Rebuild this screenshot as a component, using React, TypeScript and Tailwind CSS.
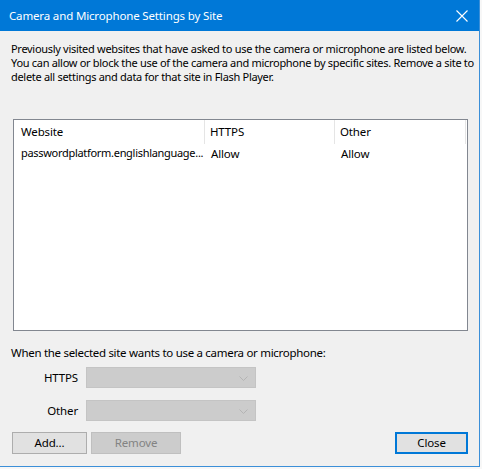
import React from 'react';

const font = { fontFamily: '"Noto Sans", "Segoe UI", sans-serif' };

function Chevron() {
    return (
        <svg width="9" height="6" viewBox="0 0 9 6" className="absolute right-[7px] top-[8px]">
            <path d="M0.5 0.5 L4.5 4.5 L8.5 0.5" fill="none" stroke="#b4b4b4" strokeWidth="1" />
        </svg>
    );
}

function Combo() {
    return (
        <div className="relative h-[21px] w-[170px] border border-[#c4c4c4] bg-[#cccccc]">
            <Chevron />
        </div>
    );
}

export default function App() {
    return (
        <div
            className="h-[469px] w-[482px] overflow-hidden bg-[#f7f7f7] text-[11.5px] tracking-[-0.15px] text-black"
            style={font}
        >
            <div className="flex h-[467px] w-[480px] flex-col border-b border-r border-[#3b8fd8] bg-[#f0f0f0]">
                {/* title bar */}
                <div className="flex h-[31px] shrink-0 items-center justify-between bg-[#0078d7] pl-[9px] pr-[11px] text-white">
                    <span className="leading-none">Camera and Microphone Settings by Site</span>
                    <svg width="12" height="12" viewBox="0 0 12 12">
                        <path d="M0.5 0.5 L11.5 11.5 M11.5 0.5 L0.5 11.5" stroke="white" strokeWidth="1.1" />
                    </svg>
                </div>

                <p className="ml-[11px] mt-[11px] whitespace-nowrap text-[11px] leading-[14px] tracking-[-0.3px]">
                    Previously visited websites that have asked to use the camera or microphone are listed below.
                    <br />
                    You can allow or block the use of the camera and microphone by specific sites. Remove a site to
                    <br />
                    delete all settings and data for that site in Flash Player.
                </p>

                {/* site list */}
                <div className="ml-[13px] mt-[35px] h-[212px] w-[455px] border border-[#828790] bg-white">
                    <div className="flex h-[24px] items-center">
                        <div className="flex h-full w-[191px] items-center border-r border-[#e5e5e5] pl-[7px]">Website</div>
                        <div className="flex h-full w-[130px] items-center border-r border-[#e5e5e5] pl-[5px]">HTTPS</div>
                        <div className="flex h-full w-[131px] items-center border-r border-[#e5e5e5] pl-[5px]">Other</div>
                    </div>
                    <div className="flex h-[19px] items-center">
                        <div className="w-[191px] overflow-hidden whitespace-nowrap pl-[7px] text-[11px] tracking-[-0.3px]">
                            passwordplatform.englishlanguage...
                        </div>
                        <div className="w-[130px] pl-[6px]">Allow</div>
                        <div className="w-[131px] pl-[6px]">Allow</div>
                    </div>
                </div>

                <div className="ml-[11px] mt-[15px] leading-[14px] tracking-[-0.3px]">
                    When the selected site wants to use a camera or microphone:
                </div>

                <div className="mt-[7px] flex flex-col gap-[12px]">
                    <div className="flex items-center">
                        <span className="w-[79px] pr-[1px] text-right">HTTPS</span>
                        <div className="ml-[7px]">
                            <Combo />
                        </div>
                    </div>
                    <div className="flex items-center">
                        <span className="w-[79px] pr-[1px] text-right">Other</span>
                        <div className="ml-[7px]">
                            <Combo />
                        </div>
                    </div>
                </div>

                <div className="ml-[12px] mr-[11px] mt-[11px] flex items-center">
                    <button className="h-[22px] w-[75px] border border-[#adadad] bg-[#e1e1e1] leading-none">Add...</button>
                    <button className="ml-[4px] h-[22px] w-[90px] border border-[#bfbfbf] bg-[#cccccc] leading-none text-[#838383]">
                        Remove
                    </button>
                    <button className="ml-auto h-[22px] w-[73px] border-2 border-[#0078d7] bg-[#e1e1e1] leading-none">Close</button>
                </div>
            </div>
        </div>
    );
}
